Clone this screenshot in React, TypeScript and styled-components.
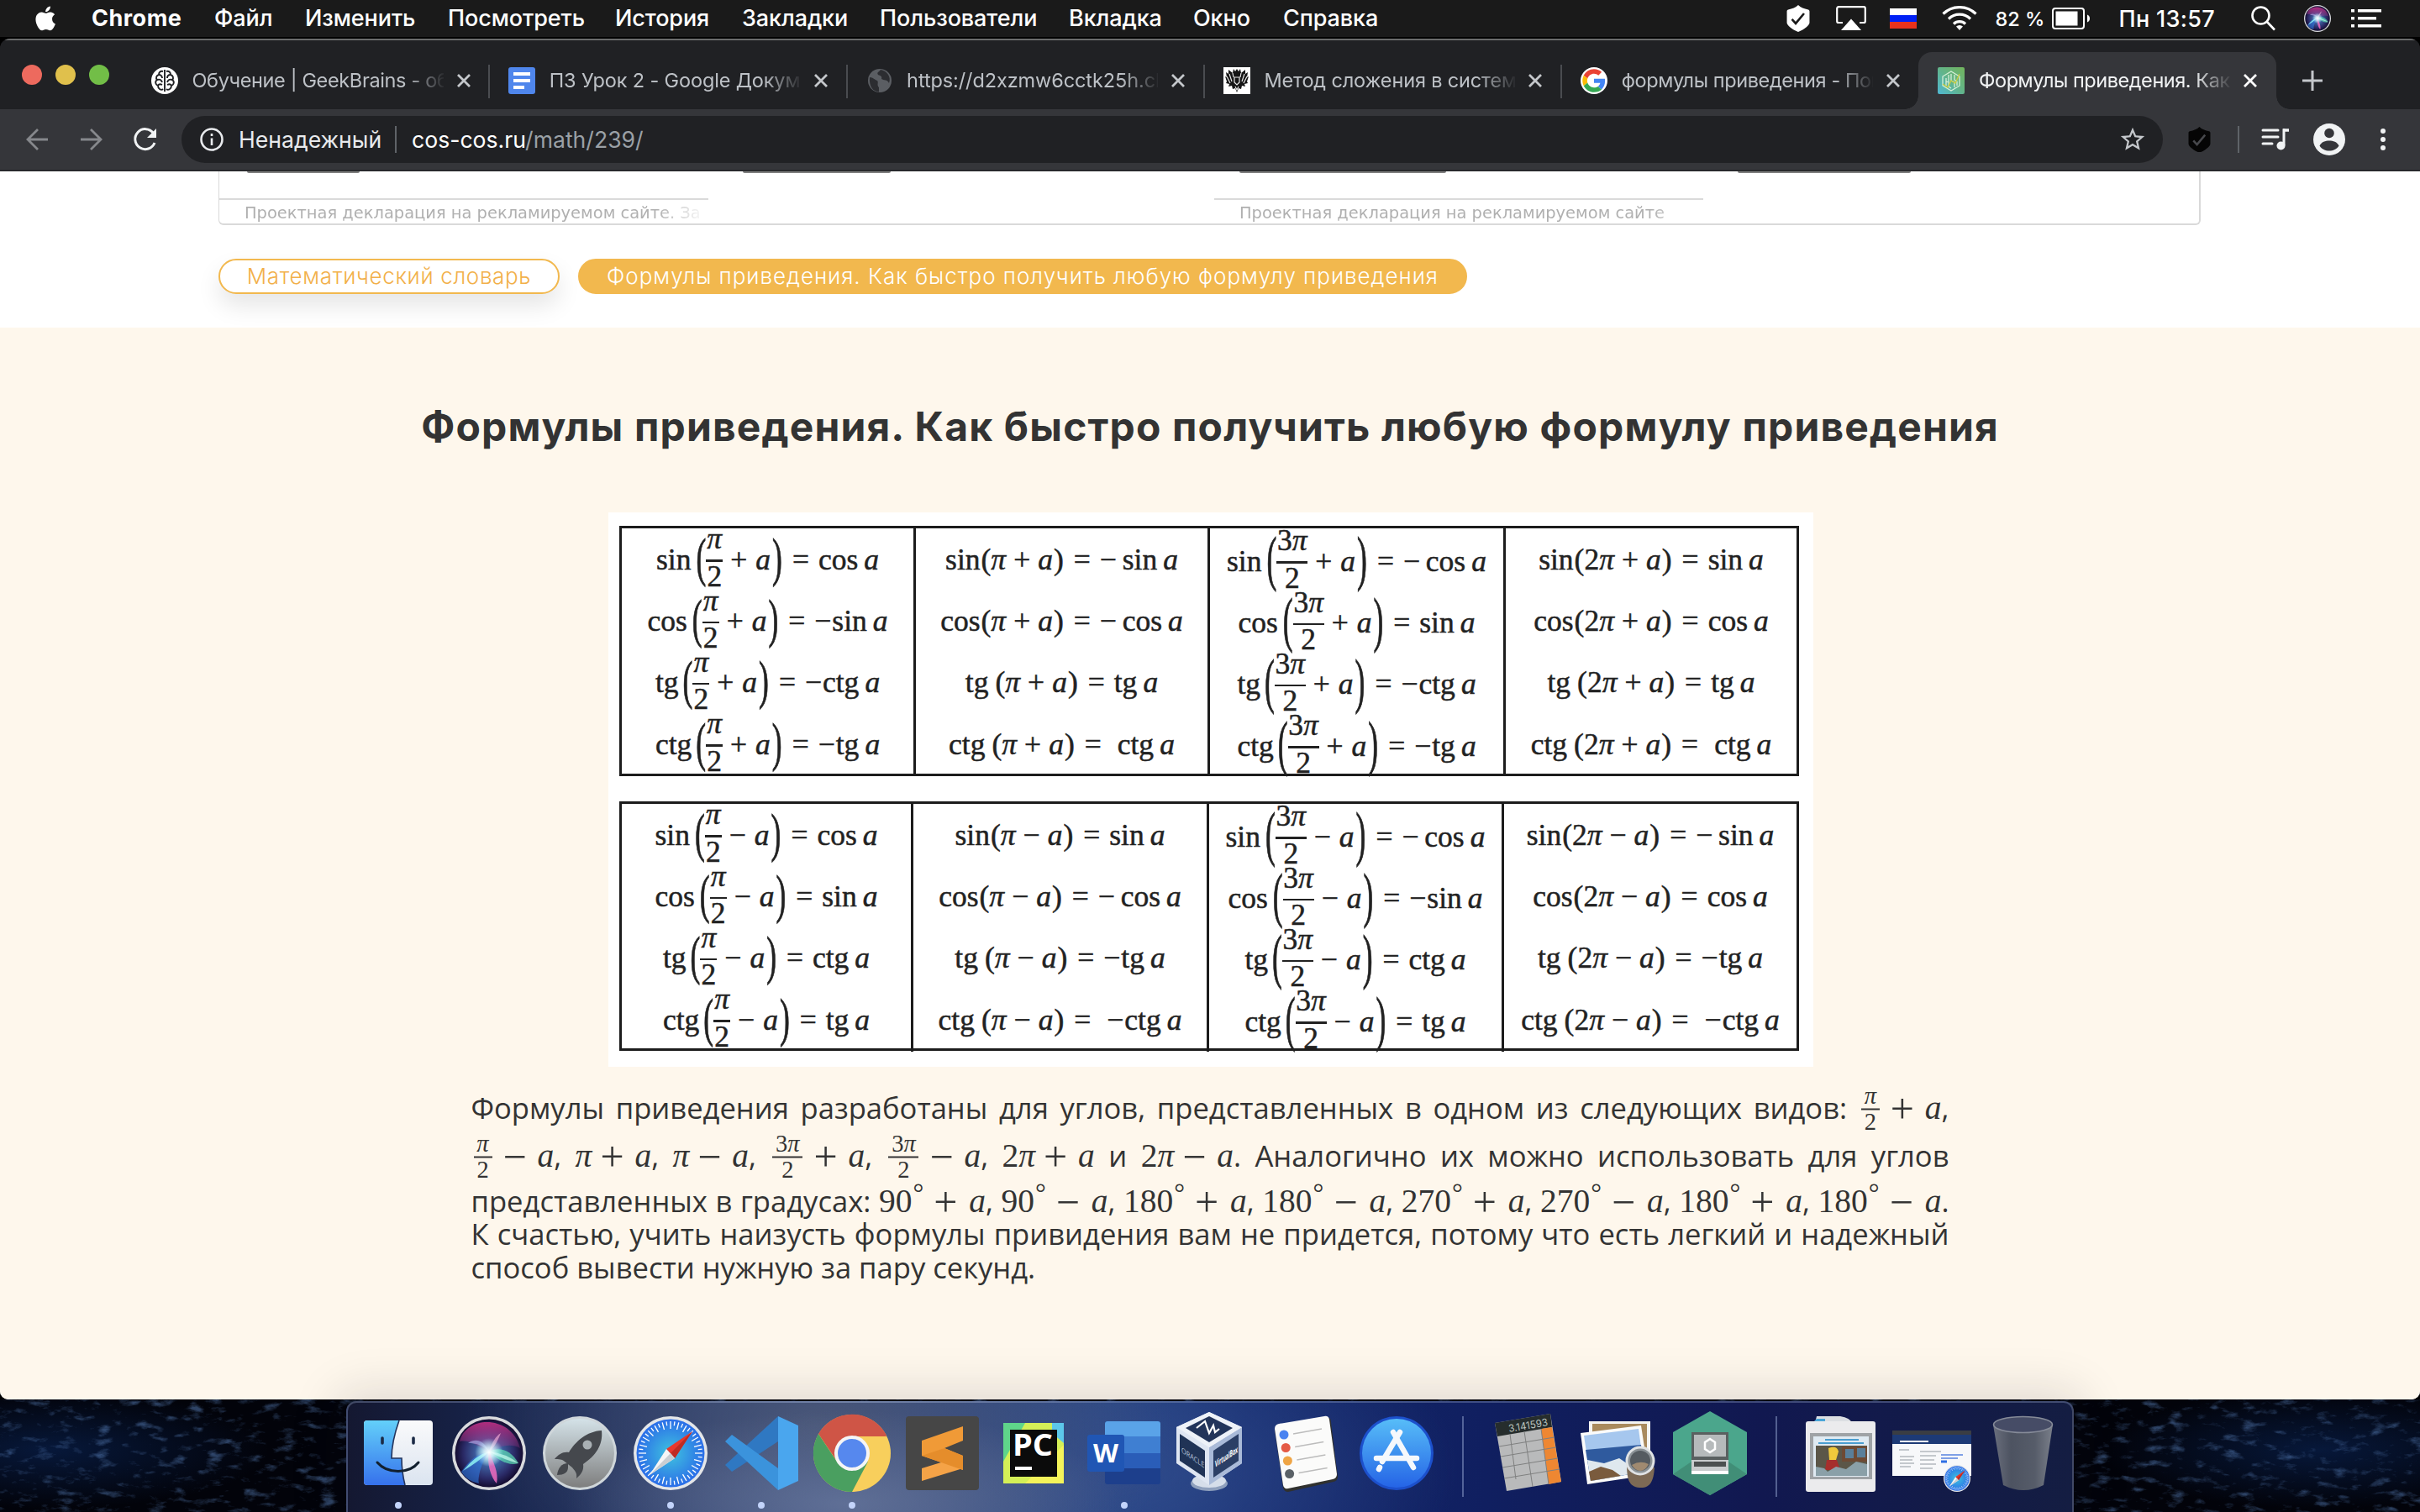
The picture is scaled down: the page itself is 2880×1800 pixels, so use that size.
import React from "react";
import styled, { createGlobalStyle, css } from "styled-components";

const Global = createGlobalStyle`
  * { box-sizing: border-box; }
  body { margin: 0; background: #000; }
  svg { display: block; flex: none; }
`;

const ui = `Inter, "Noto Sans", sans-serif`;
const serif = `"Liberation Serif", "DejaVu Serif", serif`;

const Screen = styled.div`
  width: 2880px;
  height: 1800px;
  overflow: hidden;
  background: #000;
  display: flex;
  flex-direction: column;
  font-family: ${ui};
`;

/* ---------- menu bar ---------- */
const MenuBar = styled.header`
  height: 46px;
  border-bottom: 2px solid #000;
  background: #1a1a1a;
  color: #fff;
  display: flex;
  align-items: center;
  justify-content: space-between;
  padding: 0 46.5px 0 41px;
`;
const MenuList = styled.nav`
  display: grid;
  grid-template-columns: 68px 146px 108px 170px 199px 151px 164px 225px 148px 107px 130px;
  align-items: center;
`;
const MenuItem = styled.span<{ $bold?: boolean }>`
  font-size: 27px;
  line-height: 44px;
  font-weight: ${(p) => (p.$bold ? 700 : 500)};
  letter-spacing: ${(p) => (p.$bold ? 0.5 : -0.1)}px;
  white-space: nowrap;
`;
const Status = styled.div`
  display: flex;
  align-items: center;
`;
const StatusCell = styled.div<{ $w: number }>`
  width: ${(p) => p.$w}px;
  display: flex;
  align-items: center;
`;
const StatusText = styled.span<{ $size: number; $ls?: number }>`
  font-size: ${(p) => p.$size}px;
  letter-spacing: ${(p) => p.$ls ?? 0}px;
  font-weight: 500;
  white-space: nowrap;
`;

/* ---------- browser chrome ---------- */
const Window = styled.section`
  height: 1620px;
  border-radius: 12px 12px 10px 10px;
  overflow: hidden;
  background: #202124;
  display: flex;
  flex-direction: column;
`;
const TabStrip = styled.div`
  height: 84px;
  border-top: 2px solid #6a6b6b;
  background: #202124;
  display: flex;
  align-items: flex-end;
`;
const Lights = styled.div`
  width: 157px;
  height: 82px;
  padding: 0 0 0 26px;
  display: flex;
  gap: 16px;
  align-items: center;
`;
const Light = styled.i<{ $c: string }>`
  width: 24px;
  height: 24px;
  border-radius: 50%;
  background: ${(p) => p.$c};
`;
const Tab = styled.div<{ $active?: boolean; $line?: boolean }>`
  position: relative;
  width: 425.3px;
  height: 68px;
  padding: 0 16px 0 23px;
  display: flex;
  align-items: center;
  color: ${(p) => (p.$active ? "#f1f3f4" : "#bdc1c6")};
  ${(p) =>
    p.$active &&
    css`
      background: #35363a;
      border-radius: 16px 16px 0 0;
      &::before,
      &::after {
        content: "";
        position: absolute;
        bottom: 0;
        width: 16px;
        height: 16px;
      }
      &::before {
        left: -16px;
        background: radial-gradient(circle at 0 0, transparent 15.5px, #35363a 16px);
      }
      &::after {
        right: -16px;
        background: radial-gradient(circle at 100% 0, transparent 15.5px, #35363a 16px);
      }
    `}
  ${(p) =>
    p.$line &&
    css`
      &::after {
        content: "";
        position: absolute;
        right: -1px;
        top: 15px;
        width: 2px;
        height: 40px;
        background: #4a4c50;
      }
    `}
`;
const TabTitle = styled.span<{ $ls: number }>`
  width: 299px;
  margin-left: 16.5px;
  overflow: hidden;
  white-space: nowrap;
  font-size: 23.5px;
  line-height: 34px;
  letter-spacing: ${(p) => p.$ls}px;
  mask-image: linear-gradient(90deg, #000 255px, transparent 302px);
`;
const TabClose = styled.span`
  margin-left: 16px;
`;
const NewTab = styled.div`
  height: 68px;
  padding-left: 31px;
  display: flex;
  align-items: center;
`;
const Toolbar = styled.div`
  height: 74px;
  background: #35363a;
  border-bottom: 2px solid #28292c;
  display: flex;
  align-items: center;
  padding-left: 30px;
`;
const NavIcon = styled.span<{ $w: number }>`
  width: ${(p) => p.$w}px;
`;
const Omnibox = styled.div`
  width: 2358px;
  height: 56px;
  border-radius: 28px;
  background: #202124;
  display: flex;
  align-items: center;
  padding: 0 19px 0 22px;
`;
const Insecure = styled.span`
  margin-left: 18px;
  width: 186px;
  color: #e8eaed;
  font-size: 26.6px;
  white-space: nowrap;
`;
const Rule = styled.i`
  width: 2px;
  height: 32px;
  background: #5f6368;
`;
const Url = styled.span`
  flex: 1;
  margin-left: 18px;
  color: #9aa0a6;
  font-size: 26.6px;
  b {
    font-weight: 400;
    color: #fff;
  }
`;
const Actions = styled.div`
  display: flex;
  align-items: center;
  padding-left: 30px;
`;

/* ---------- page ---------- */
const Page = styled.main`
  flex: 1;
  background: #fff;
  display: flex;
  flex-direction: column;
`;
const AdBox = styled.div`
  width: 2359px;
  height: 64px;
  margin-left: 260px;
  border: solid #d9d9d9;
  border-width: 0 2px 2px 1.5px;
  border-radius: 0 0 6px 6px;
  display: grid;
  grid-template-columns: 589px 595px 589px 1fr;
`;
const AdCell = styled.div`
  display: flex;
  flex-direction: column;
`;
const AdStub = styled.i<{ $w: number; $x: number }>`
  width: ${(p) => p.$w}px;
  height: 2px;
  margin-left: ${(p) => p.$x}px;
  border-radius: 0 0 4px 4px;
  background: #7f7f7f;
`;
const AdRule = styled.i`
  width: 582px;
  height: 2px;
  margin-top: 30px;
  background: #dadada;
`;
const AdNote = styled.p`
  width: 583px;
  margin: 0;
  padding: 3px 0 0 30px;
  color: #b0b0b0;
  font: 19.45px/26px "DejaVu Sans", sans-serif;
  white-space: nowrap;
  overflow: hidden;
  mask-image: linear-gradient(90deg, #000 520px, transparent 580px);
`;
const Crumbs = styled.div`
  display: flex;
  gap: 22px;
  padding: 40px 0 40px 260px;
`;
const Crumb = styled.a<{ $w: number; $filled?: boolean }>`
  width: ${(p) => p.$w}px;
  height: 42px;
  padding-bottom: 2px;
  border: 2px solid #f2b84e;
  border-radius: 21px;
  display: flex;
  align-items: center;
  justify-content: center;
  white-space: nowrap;
  font-weight: 300;
  font-size: 26px;
  letter-spacing: ${(p) => (p.$filled ? 0.97 : 0.65)}px;
  background: ${(p) => (p.$filled ? "#f2b84e" : "#fff")};
  color: ${(p) => (p.$filled ? "#fff" : "#f2b04a")};
  box-shadow: ${(p) => (p.$filled ? "none" : "0 14px 28px rgba(0,0,0,.1)")};
`;
const Article = styled.article`
  flex: 1;
  background: #fef7ec;
  display: flex;
  flex-direction: column;
  align-items: center;
`;
const Title = styled.h1`
  margin: 84px 0 0;
  height: 136px;
  color: #333;
  font-size: 48px;
  line-height: 67px;
  font-weight: 700;
  letter-spacing: 1.14px;
  white-space: nowrap;
`;
const Sheet = styled.div`
  width: 1434px;
  height: 660px;
  margin-right: -2px;
  padding: 16px 17px 0 13px;
  background: #fff;
  display: flex;
  flex-direction: column;
  gap: 30px;
`;
const Table = styled.div<{ $cols: string; $h: number }>`
  height: ${(p) => p.$h}px;
  border: 3px solid #1c1c1c;
  display: grid;
  grid-template-columns: ${(p) => p.$cols};
`;
const Cell = styled.div<{ $shift: number }>`
  padding-top: ${(p) => p.$shift}px;
  border-right: 3px solid #1c1c1c;
  &:last-child {
    border-right: 0;
  }
`;
const Formula = styled.div`
  height: 73.3px;
  display: flex;
  align-items: center;
  justify-content: center;
  font: 35.5px/36px ${serif};
  color: #222;
  -webkit-text-stroke: 0.5px #222;
  white-space: pre;
`;
const Var = styled.i`
  font-style: italic;
`;
const Sign = styled.span<{ $l: number; $r: number }>`
  margin: 0 ${(p) => p.$r}px 0 ${(p) => p.$l}px;
`;
const Paren = styled.span<{ $scale: number; $l?: number; $r?: number }>`
  display: inline-block;
  transform: scaleY(${(p) => p.$scale});
  transform-origin: 50% 21px;
  margin: 0 ${(p) => p.$r ?? 0}px 0 ${(p) => p.$l ?? 0}px;
`;
const Frac = styled.span<{ $w: number }>`
  width: ${(p) => p.$w}px;
  display: flex;
  flex-direction: column;
  align-items: center;
  transform: translateY(2px);
  span {
    height: 35px;
  }
  span:first-child {
    line-height: 20px;
  }
  span:last-child {
    line-height: 35px;
  }
`;
const FracBar = styled.i`
  width: 100%;
  height: 2.5px;
  background: #222;
`;

const Prose = styled.div`
  width: 1759px;
  margin: 20px 0 0;
  color: #333;
  font-family: "Open Sans", "Noto Sans", sans-serif;
  font-size: 34.6px;
`;
const Line = styled.div<{ $h: number; $top?: number; $left?: boolean }>`
  height: ${(p) => p.$h}px;
  padding-top: ${(p) => p.$top ?? 0}px;
  line-height: ${(p) => p.$h - (p.$top ?? 0)}px;
  white-space: nowrap;
  text-align: justify;
  text-align-last: ${(p) => (p.$left ? "left" : "justify")};
`;
const Tex = styled.span`
  display: inline-flex;
  align-items: baseline;
  height: 38px;
  line-height: 38px;
  vertical-align: baseline;
  font-family: ${serif};
  font-size: 39.5px;
`;
const TexOp = styled.span<{ $wide?: boolean }>`
  width: 31px;
  margin: 0 ${(p) => (p.$wide ? 11 : 10)}px;
  text-align: center;
  font-size: 50px;
  line-height: 0;
  transform: translateY(5px);
`;
const TexFrac = styled.span<{ $w: number }>`
  width: ${(p) => p.$w}px;
  margin: 0 3px;
  align-self: center;
  display: flex;
  flex-direction: column;
  align-items: center;
  font-size: 28.5px;
  line-height: 26px;
  transform: translateY(0.5px);
  hr {
    width: 100%;
    height: 2px;
    margin: 2px 0 1px;
    border: 0;
    background: #333;
  }
`;
const Deg = styled.sup`
  font-size: 32px;
  line-height: 0;
  align-self: flex-start;
  transform: translateY(9px);
  margin: 0 1px;
`;

/* ---------- dock ---------- */
const Desktop = styled.footer`
  position: relative;
  height: 134px;
  display: flex;
  justify-content: center;
  padding: 2px 1px 0 0;
  background:
    radial-gradient(ellipse 260px 70px at 60px 60px, #07183a 0, transparent 100%),
    radial-gradient(ellipse 260px 70px at 2760px 60px, #07183a 0, transparent 100%),
    #02030a;
`;
const Sea = styled.svg`
  position: absolute;
  inset: 0;
`;
const Dock = styled.div`
  position: relative;
  width: 2056px;
  height: 132px;
  padding-left: 6px;
  border: 2px solid rgba(150, 165, 200, 0.35);
  border-bottom: 0;
  border-radius: 12px 12px 0 0;
  display: flex;
  box-shadow: 0 0 56px 12px rgba(20, 20, 40, 0.13);
  background:
    radial-gradient(ellipse 330px 110px at 590px 120px, #5f6f96 0, transparent 100%),
    radial-gradient(ellipse 420px 260px at 560px 30px, #4a5778 0, transparent 100%),
    radial-gradient(ellipse 420px 220px at 900px 80px, #2f4b8c 0, transparent 100%),
    linear-gradient(90deg, #141831 0, #17244c 9%, #263f7c 32%, #24427e 44%, #13276a 52%, #101f60 66%, #111850 82%, #141d42 100%);
`;
const DockItem = styled.div`
  width: 108px;
  margin-top: -2px;
  display: flex;
  flex-direction: column;
  align-items: center;
  position: relative;
`;
const Running = styled.i`
  position: absolute;
  top: 120px;
  width: 8px;
  height: 8px;
  border-radius: 50%;
  background: #c3d4fb;
`;
const DockRule = styled.i`
  width: 2px;
  height: 96px;
  margin: 16px 23px 0 24px;
  background: rgba(150, 165, 210, 0.5);
`;

/* ---------- icon drawings ---------- */
const Apple = () => (
  <svg width="28" height="34" viewBox="2 0 20 24" fill="#fff">
    <path d="M17.05 12.54c-.03-2.6 2.12-3.85 2.22-3.91-1.21-1.77-3.1-2.01-3.77-2.04-1.6-.16-3.13.94-3.94.94-.81 0-2.07-.92-3.4-.9-1.75.03-3.36 1.02-4.26 2.58-1.82 3.15-.46 7.82 1.31 10.38.87 1.25 1.9 2.66 3.25 2.61 1.3-.05 1.8-.84 3.37-.84 1.58 0 2.02.84 3.4.82 1.41-.03 2.3-1.28 3.16-2.54.99-1.46 1.4-2.87 1.42-2.94-.03-.01-2.73-1.05-2.76-4.16zM14.46 4.9c.72-.87 1.2-2.08 1.07-3.29-1.03.04-2.29.69-3.03 1.56-.66.77-1.25 2-1.09 3.18 1.15.09 2.33-.59 3.05-1.45z" />
  </svg>
);
const Shield = ({ c, k, w = 28 }: { c: string; k: string; w?: number }) => (
  <svg width={w} height={w * 1.14} viewBox="0 0 28 32">
    <path d="M14 0c3 3 7 4.500 12 5.500.8.200 1.500 1 1.500 2V21c0 3-6 8-13.500 11C6.500 29 .5 24 .5 21V7.500c0-1 .7-1.800 1.500-2C7 4.500 11 3 14 0z" fill={c} />
    <path d="M6.500 17l4.500 5L21 10" stroke={k} strokeWidth="2.600" fill="none" />
  </svg>
);
const Airplay = () => (
  <svg width="36" height="30" viewBox="0 0 36 30">
    <path d="M8 20H3a1.800 1.800 0 0 1-1.800-1.800V3A1.800 1.800 0 0 1 3 1.200h30A1.800 1.800 0 0 1 34.800 3v15.200A1.800 1.800 0 0 1 33 20h-5" stroke="#fff" strokeWidth="2.200" fill="none" />
    <path d="M18 15.500l12 13.500H6z" fill="#fff" />
  </svg>
);
const Flag = () => (
  <svg width="32" height="24" viewBox="0 0 32 24">
    <path fill="#fff" d="M0 0h32v8H0z" />
    <path fill="#0020f5" d="M0 8h32v8H0z" />
    <path fill="#e8321c" d="M0 16h32v8H0z" />
  </svg>
);
const Wifi = () => (
  <svg width="42" height="30" viewBox="0 0 42 30" fill="none" stroke="#fff" strokeWidth="3.200">
    <path d="M1.500 9.500a28 28 0 0 1 39 0M8 15.500a18.500 18.500 0 0 1 26 0M14 21.500a10 10 0 0 1 14 0" />
    <path d="M21 29l-4-4.500a6 6 0 0 1 8 0z" fill="#fff" stroke="none" />
  </svg>
);
const Battery = () => (
  <svg width="46" height="26" viewBox="0 0 46 26">
    <rect x="1" y="1" width="37" height="24" rx="3" fill="none" stroke="#fff" strokeWidth="2" />
    <rect x="4.500" y="4.500" width="26" height="17" fill="#fff" />
    <path d="M42 8.500c4 1 4 8 0 9z" fill="#fff" />
  </svg>
);
const Search = () => (
  <svg width="30" height="30" viewBox="0 0 30 30" fill="none" stroke="#fff" strokeWidth="2.600">
    <circle cx="11.500" cy="11.500" r="10" />
    <path d="M18.500 18.500L28 28.500" />
  </svg>
);
const SiriOrb = ({ r, ring = "#d8dadd" }: { r: number; ring?: string }) => (
  <>
    <defs>
      <radialGradient id={`orb${r}`} cx=".5" cy=".5" r=".5">
        <stop offset="0" stopColor="#8fd8ee" />
        <stop offset=".4" stopColor="#3d5c9c" />
        <stop offset=".75" stopColor="#2a2a66" />
        <stop offset="1" stopColor="#140c30" />
      </radialGradient>
      <radialGradient id={`glow${r}`}>
        <stop offset="0" stopColor="#fff" />
        <stop offset=".35" stopColor="#e8fbff" stopOpacity=".75" />
        <stop offset="1" stopColor="#aef2ff" stopOpacity="0" />
      </radialGradient>
      <linearGradient id={`orbp${r}`} x1="0" y1="0" x2="0" y2="1">
        <stop offset="0" stopColor="#c22f84" stopOpacity=".9" />
        <stop offset=".7" stopColor="#a63a8c" stopOpacity=".35" />
        <stop offset="1" stopColor="#7a2b8f" stopOpacity="0" />
      </linearGradient>
    </defs>
    <g transform={`scale(${r / 44})`}>
      <circle r="44" fill={ring} />
      <circle r="40.500" fill={`url(#orb${r})`} />
      <path d="M-35-14C-27-46 27-46 37-6 26-12 12-10 0 2-12-10-24-16-35-14z" fill={`url(#orbp${r})`} />
      <path d="M-33 22C-20 4-10-2 0 0-8 8-14 28-12 36-22 34-29 29-33 22z" fill="#2f7ae0" opacity=".6" />
      <path d="M-31 21Q-16 2 0-2-12 10-31 21z" fill="#8ff3f3" opacity=".85" />
      <path d="M0-2C12-8 26-4 35 12 24 16 10 8 0-2z" fill="#5fe9b8" opacity=".65" />
      <path d="M0-2Q20 0 35 12 18 8 0-2z" fill="#c8fff0" opacity=".7" />
      <path d="M0-2c5 12 12 26 9 38C2 28-3 12 0-2z" fill="#f06cc0" opacity=".85" />
      <path d="M-25-12C-14-20-4-12 0-2-8-10-16-12-25-12z" fill="#b9c6ff" opacity=".5" />
      <path d="M0-2C4-14 8-20 14-24 10-14 6-6 0-2z" fill="#ffb7dd" opacity=".6" />
      <circle cy="-1" r="17" fill={`url(#glow${r})`} />
    </g>
  </>
);
const MenuLines = () => (
  <svg width="36" height="22" viewBox="0 0 36 22" fill="#fff">
    <path d="M0 0h4v3.600H0zM8 0h28v3.600H8zM0 9h4v3.600H0zM8 9h22v3.600H8zM0 18h4v3.600H0zM8 18h28v3.600H8z" />
  </svg>
);
const Close = ({ c = "#c4c7cb" }: { c?: string }) => (
  <svg width="16" height="16" viewBox="0 0 16 16" stroke={c} strokeWidth="2.800">
    <path d="M1 1l14 14M15 1L1 15" />
  </svg>
);
const FavBrain = () => (
  <svg width="32" height="32" viewBox="0 0 32 32">
    <circle cx="16" cy="16" r="16" fill="#fff" />
    <g fill="none" stroke="#202124" strokeWidth="1.900">
      <path d="M16 3v26M14 5c-3-1-5 1-5 4-3 1-4 4-2 6-3 2-2 6 1 7 0 4 4 6 6 4M18 5c3-1 5 1 5 4 3 1 4 4 2 6 3 2 2 6-1 7 0 4-4 6-6 4" />
      <path d="M9 9c2 0 4 1 4 4M7 15c3-1 5 0 6 3M8 22c1-2 3-2 5-1M23 9c-2 0-4 1-4 4M25 15c-3-1-5 0-6 3M24 22c-1-2-3-2-5-1" />
    </g>
  </svg>
);
const FavDocs = () => (
  <svg width="32" height="32" viewBox="0 0 32 32">
    <rect width="32" height="32" rx="3" fill="#4f86ec" />
    <path d="M6 6h20v4H6zM6 14h20v4H6zM6 22h13v4H6z" fill="#fff" />
  </svg>
);
const FavGlobe = () => (
  <svg width="32" height="32" viewBox="0 0 32 32">
    <circle cx="16" cy="16" r="14" fill="#5b5e63" />
    <path d="M4 12c4 0 6 3 9 4 2 2-1 5 2 8v5.500C8 29 3 23 4 12zM17 3c-2 3-5 3-3 6 3 1 5 2 4 5 3 2 7 0 9 5 3-8-3-15-10-16z" fill="#2c2d31" />
  </svg>
);
const FavCrest = () => (
  <svg width="32" height="32" viewBox="0 0 32 32">
    <path d="M0 0h32v32H0z" fill="#fff" />
    <path d="M12 2l2 3 2-3 2 3 2-3 1 5 5-4v5l3-2-1 6 2-1-2 6 1 2-4 1 1 3-4-1-1 4-3-1-2 5-2-5-3 1-1-4-4 1 1-3-4-1 1-2-2-6 2 1-1-6 3 2V3l5 4z" fill="#151515" />
    <path d="M13 12h6v6l-3 3-3-3zM11 7l1 5M21 7l-1 5M7 8l3 9M25 8l-3 9M4 11l4 8M28 11l-4 8M14 23l2 4 2-4" stroke="#e8e8e8" strokeWidth="1.200" fill="none" />
  </svg>
);
const FavGoogle = () => (
  <svg width="32" height="32" viewBox="-4 -4 56 56">
    <circle cx="24" cy="24" r="28" fill="#fff" />
    <path fill="#EA4335" d="M24 9.500c3.540 0 6.710 1.220 9.210 3.600l6.850-6.850C35.900 2.380 30.470 0 24 0 14.620 0 6.510 5.380 2.560 13.220l7.980 6.190C12.430 13.720 17.740 9.500 24 9.500z" />
    <path fill="#4285F4" d="M46.980 24.550c0-1.570-.15-3.090-.38-4.550H24v9.020h12.940c-.58 2.960-2.260 5.480-4.780 7.180l7.730 6c4.510-4.180 7.090-10.360 7.090-17.650z" />
    <path fill="#FBBC05" d="M10.530 28.590c-.48-1.450-.76-2.990-.76-4.590s.27-3.140.76-4.590l-7.980-6.190C.92 16.460 0 20.120 0 24c0 3.880.92 7.540 2.560 10.780l7.970-6.190z" />
    <path fill="#34A853" d="M24 48c6.480 0 11.930-2.130 15.890-5.810l-7.730-6c-2.150 1.450-4.920 2.300-8.160 2.300-6.260 0-11.570-4.220-13.470-9.910l-7.980 6.190C6.510 42.620 14.620 48 24 48z" />
  </svg>
);
const FavCube = () => (
  <svg width="32" height="32" viewBox="0 0 32 32">
    <defs>
      <linearGradient id="cube" x1="0" y1="1" x2="1" y2="0">
        <stop offset="0" stopColor="#4fb8d4" />
        <stop offset=".5" stopColor="#62b48a" />
        <stop offset="1" stopColor="#72b45c" />
      </linearGradient>
    </defs>
    <rect width="32" height="32" rx="2" fill="url(#cube)" />
    <path d="M16 5l10 6v11l-10 6-10-6V11zM10 13v9M10 17l3 1M13 9v14l3 2M16 8v8l4 2v6M20 9v6l3 2v5" stroke="#d7f0d8" strokeWidth="1.300" fill="none" />
    <path d="M6 20l6 4 4-8 5 3 5-11" stroke="#c9cc3e" strokeWidth="1.300" fill="none" />
  </svg>
);
const ArrowLeft = ({ flip }: { flip?: boolean }) => (
  <svg width="28" height="28" viewBox="0 0 28 28" fill="none" stroke="#86888c" strokeWidth="2.800" transform={flip ? "scale(-1 1)" : undefined}>
    <path d="M27 14H4M15 2L3 14l12 12" />
  </svg>
);
const Reload = () => (
  <svg width="30" height="30" viewBox="0 0 30 30">
    <path d="M24.500 7.500A12 12 0 1 0 26 19" fill="none" stroke="#f1f3f4" strokeWidth="3" />
    <path d="M28 2v11H17z" fill="#f1f3f4" />
  </svg>
);
const Info = () => (
  <svg width="28" height="28" viewBox="0 0 28 28" fill="none" stroke="#e8eaed" strokeWidth="2.600">
    <circle cx="14" cy="14" r="12.500" />
    <path d="M14 12.500V21M14 7v3" />
  </svg>
);
const Star = () => (
  <svg width="34" height="34" viewBox="0 0 24 24" fill="#c4c7cb">
    <path d="M22 9.240l-7.190-.62L12 2 9.190 8.630 2 9.240l5.460 4.730L5.820 21 12 17.270 18.180 21l-1.630-7.030L22 9.240zM12 15.400l-3.760 2.270 1-4.280-3.320-2.880 4.380-.38L12 6.100l1.710 4.040 4.380.38-3.320 2.880 1 4.280L12 15.400z" />
  </svg>
);
const Playlist = () => (
  <svg width="34" height="28" viewBox="0 0 34 28">
    <path d="M2 3h18M2 11h18M2 19h11" stroke="#f1f3f4" strokeWidth="3" strokeLinecap="round" />
    <path d="M26 3h7" stroke="#f1f3f4" strokeWidth="3.400" />
    <path d="M27 1.300v20" stroke="#f1f3f4" strokeWidth="3" />
    <circle cx="23.500" cy="21.500" r="5" fill="#f1f3f4" />
  </svg>
);
const Avatar = () => (
  <svg width="38" height="38" viewBox="0 0 38 38">
    <circle cx="19" cy="19" r="19" fill="#f1f3f4" />
    <circle cx="19" cy="11.500" r="5.800" fill="#35363a" />
    <path d="M7.500 26.500c2-4.500 7-6 11.500-6s9.500 1.500 11.500 6c-2.500 4-7 6-11.500 6s-9-2-11.500-6z" fill="#35363a" />
  </svg>
);
const Dots = () => (
  <svg width="8" height="28" viewBox="0 0 8 28" fill="#f1f3f4">
    <circle cx="4" cy="4" r="3" />
    <circle cx="4" cy="14" r="3" />
    <circle cx="4" cy="24" r="3" />
  </svg>
);

const safariTicks = Array.from({ length: 48 }, (_, i) => i * 7.5);
const SafariDial = ({ r }: { r: number }) => (
  <g transform={`scale(${r / 44})`}>
    <circle r="44" fill="#e4e6e8" />
    <circle r="40.500" fill="url(#safari)" />
    {safariTicks.map((a, i) => (
      <path key={a} d={i % 2 ? "M0-38v5" : "M0-38v9"} stroke="#fff" strokeWidth="1.300" transform={`rotate(${a})`} />
    ))}
    <path d="M26-26L5 6-5-5z" fill="#e8382d" />
    <path d="M26-26L5 6 0 0z" fill="#bf2b22" />
    <path d="M-25 26L-5-5 5 6z" fill="#f6f6f6" />
    <path d="M-25 26L0 0 5 6z" fill="#c9ced2" />
  </g>
);

const glyphs: Record<string, React.ReactNode> = {
  finder: (
    <>
      <defs>
        <linearGradient id="fl" x1="0" y1="0" x2="0" y2="1">
          <stop offset="0" stopColor="#63d0fa" />
          <stop offset="1" stopColor="#3671ec" />
        </linearGradient>
        <linearGradient id="fr" x1="0" y1="0" x2="0" y2="1">
          <stop offset="0" stopColor="#fafafb" />
          <stop offset="1" stopColor="#dbe4f0" />
        </linearGradient>
      </defs>
      <rect x="-41" y="-39" width="82" height="77" rx="4" fill="url(#fr)" />
      <path d="M-37-39H1C-5-22-8-9-8 6H4c0 10 1 20 4 32h-45a4 4 0 0 1-4-4v-69a4 4 0 0 1 4-4z" fill="url(#fl)" />
      <path d="M1-39C-5-22-8-9-8 6H4c0 10 1 20 4 32" fill="none" stroke="#24345c" strokeWidth="1.600" />
      <path d="M-19-18v6M18-18v6" stroke="#1c2b46" strokeWidth="3.600" strokeLinecap="round" />
      <path d="M-25 11c12 14 38 14 49 0" fill="none" stroke="#12202f" strokeWidth="3" strokeLinecap="round" />
    </>
  ),
  siri: <SiriOrb r={44} />,
  rocket: (
    <>
      <defs>
        <linearGradient id="rk" x1="0" y1="0" x2="0" y2="1">
          <stop offset="0" stopColor="#d4e2e8" />
          <stop offset="1" stopColor="#7e7e7e" />
        </linearGradient>
      </defs>
      <circle r="44" fill="#cfd6da" />
      <circle r="41" fill="url(#rk)" />
      <path d="M26-27C8-26-5-14-13-1c-7-1-12 2-17 8 5 0 9 0 12 3L-9 17c3 4 6 6 5 13 6-5 9-10 8-17C19 3 28-10 26-27z" fill="#45484d" />
      <circle cx="9" cy="-10" r="5.500" fill="#a9b0b4" />
      <path d="M-14 12c-8 0-12 6-13 14 8 0 13-3 13-9z" fill="#45484d" />
    </>
  ),
  safari: (
    <>
      <defs>
        <radialGradient id="safari">
          <stop offset="0" stopColor="#3fc3df" />
          <stop offset="1" stopColor="#2b6ee8" />
        </radialGradient>
      </defs>
      <SafariDial r={44} />
    </>
  ),
  code: (
    <>
      <path d="M-43 14L20-44V-14L-35 22z" fill="#2f78c2" />
      <path d="M-43-14l8-8L20 18v26z" fill="#3b93dc" />
      <path d="M20-44l24 11v66L20 44z" fill="#4aa6ee" />
    </>
  ),
  chrome: (
    <>
      <circle r="46" fill="#f8cf5c" />
      <path d="M-40-23A46 46 0 0 1 40-23L41-20H0L-19 8z" fill="#cf5546" />
      <path d="M-40-23A46 46 0 0 0 0 46L19 10 0 20-18 10z" fill="#4a9f60" />
      <circle r="21" fill="#f5f5f5" />
      <circle r="17" fill="#5688ee" />
    </>
  ),
  sublime: (
    <>
      <rect x="-44" y="-44" width="87" height="88" rx="4" fill="#464646" />
      <path d="M24-32L-25-15V3L24 20V3L2-6 24-15z" fill="#f09a37" />
      <path d="M24 3L-25 18v15L24 18z" fill="#f5a347" />
      <path d="M24 20L-25 3 2-6 24 3z" fill="#e58d2b" />
    </>
  ),
  pycharm: (
    <>
      <path d="M-36-36h72v72h-72z" fill="#5fd58a" />
      <path d="M-10-36h34L36-20v56h-72V10z" fill="#d4ef57" />
      <path d="M-10 36L36-10v46z" fill="#f4f35a" />
      <path d="M22-36h14v24L22-24z" fill="#5cc7ea" />
      <rect x="-28" y="-28" width="56" height="56" fill="#0b0b0b" />
      <text x="-25" y="3" fontFamily="Open Sans" fontWeight="700" fontSize="35" textLength="48" lengthAdjust="spacingAndGlyphs" fill="#fff">PC</text>
      <path d="M-22 18H-2" stroke="#fff" strokeWidth="4" />
    </>
  ),
  word: (
    <>
      <rect x="-23" y="-38" width="66" height="75" rx="3" fill="#1d3f8c" />
      <path d="M-23-20h66v38h-66z" fill="#2a5db8" />
      <path d="M-23-20h66V0h-66z" fill="#3f7fd2" />
      <path d="M-20-38h60a3 3 0 0 1 3 3v15h-66v-15a3 3 0 0 1 3-3z" fill="#5aa3e8" />
      <rect x="-44" y="-22" width="44" height="44" rx="3" fill="#2056b4" />
      <text x="-22" y="11" fontFamily="Open Sans" fontWeight="700" fontSize="31" textAnchor="middle" fill="#fff">W</text>
    </>
  ),
  vbox: (
    <g transform="translate(-7 0)">
      <ellipse cy="36" rx="22" ry="9" fill="#8fa0bd" />
      <ellipse cy="33" rx="20" ry="8" fill="#d6deea" />
      <path d="M0-49L39-31V12L0 38-39 12V-31z" fill="#dfe6f2" />
      <path d="M39-31L0-7V38L39 12z" fill="#a9bad8" />
      <path d="M0-49L39-31 0-7-39-31z" fill="#eef2f8" />
      <path d="M0-44L28-30 0-13-28-30z" fill="#22345a" />
      <path d="M-15-30L-5-38 0-24 5-33 7-25 12-29" stroke="#fff" strokeWidth="2.200" fill="none" />
      <path d="M-35-23L-5-3V29L-35 9z" fill="#203356" />
      <path d="M35-23L5-3V29L35 9z" fill="#2b3f66" />
      <text transform="matrix(.8 .55 0 1 -33 -1)" fontFamily="Open Sans" fontSize="9" textLength="34" lengthAdjust="spacingAndGlyphs" fill="#b8c4da">ORACLE</text>
      <text transform="matrix(.75 -.5 0 1 7 17)" fontFamily="Open Sans" fontWeight="700" fontSize="11" textLength="36" lengthAdjust="spacingAndGlyphs" fill="#fff">VirtualBox</text>
    </g>
  ),
  reminders: (
    <>
      <path d="M-32-34L24-43q5-1 5 5L37 27q0 5-5 6L-22 45q-5 0-6-5L-38-28q0-5 6-6z" fill="#30312f" transform="translate(1 1)" />
      <path d="M-32-35L22-44q5-1 6 4L37 25q0 5-5 6L-21 42q-5 1-6-4L-37-29q0-5 5-6z" fill="#fbfbfa" />
      {["#4a83f0", "#e45a45", "#efa545", "#5a6166"].map((c, i) => (
        <g key={c}>
          <circle cx={-26 + i * 2.2} cy={-22 + i * 15.5} r="5.500" fill={c} />
          <path d={`M${-15 + i * 2.2} ${-23 + i * 15.5}l34-6`} stroke="#bcbcbc" strokeWidth="1.500" />
        </g>
      ))}
    </>
  ),
  appstore: (
    <>
      <defs>
        <linearGradient id="as" x1="0" y1="0" x2="0" y2="1">
          <stop offset="0" stopColor="#57bdf8" />
          <stop offset="1" stopColor="#2564e6" />
        </linearGradient>
      </defs>
      <circle r="44" fill="#1c50cc" />
      <circle r="41" fill="url(#as)" />
      <g stroke="#f5f8fc" strokeWidth="6.500" strokeLinecap="round">
        <path d="M4-25L-17 10M-20 17L-21 19M-4-25L20 17M-24 6H24" />
      </g>
    </>
  ),
  calculator: (
    <>
      <path d="M-40-36L26-47 39 34-26 45z" fill="#b9babb" />
      <path d="M-40-36L26-47 28-31-37-20z" fill="#262d2d" />
      <path d="M15-29L28-31 39 34 24 37z" fill="#ee8732" />
      <g stroke="#7f8080" strokeWidth="1">
        <path d="M-35-8L31-19M-33 4L33-7M-31 17L35 6M-29 30L37 19M-22-23L-15 31M-5-26L5 40M15-29L24 37" />
      </g>
      <text transform="matrix(.95 -.16 .16 1 -23 -25)" fontFamily="Inter" fontSize="12" fill="#b9c2bf">3.141593</text>
    </>
  ),
  preview: (
    <>
      <path d="M-36-38H37V8H-36z" fill="#f4f4f2" />
      <path d="M-32-35H33V4H-32z" fill="#a98a5d" />
      <path d="M-46-24L26-33 35 26-38 37z" fill="#fbfbfa" />
      <path d="M-42-21L23-29 30 22-34 33z" fill="#a6c7ee" />
      <path d="M-40-4L26-10 30 22-34 33z" fill="#2f5a9e" />
      <path d="M-38 8l20 4 18-6 12 8 17 2 1 6-64 11z" fill="#dfe8ee" />
      <path d="M-36 22l14-6 14 4 10 7-36 6z" fill="#7a5b3d" />
      <path d="M9 12C9 30 11 40 24 41s17-8 18-24z" fill="#7d6a55" />
      <circle cx="25" cy="9" r="16" fill="#8b9296" stroke="#dfe2e4" strokeWidth="3" />
      <circle cx="25" cy="9" r="12" fill="#555b60" />
      <path d="M15 14q10-6 20-1-4 8-10 8t-10-7z" fill="#a08a70" />
    </>
  ),
  hexagon: (
    <>
      <path d="M0-50L44-25V25L0 50-44 25V-25z" fill="#4ba68c" />
      <path d="M-44 25L-22 10H22L44 25 0 50z" fill="#418e77" />
      <path d="M-22-25H22V25H-22z" fill="#c9cccd" />
      <path d="M-22-25H22V8H-22z" fill="#5a6060" />
      <path d="M-19-22H19V4H-19z" fill="#b6babb" />
      <path d="M0-17L6-13V-5L0-1-6-5V-13z" fill="none" stroke="#fff" strokeWidth="2.500" />
      <path d="M-19 10H19V16H-19z" fill="#4c5050" />
      <path d="M-22 21H22V25H-22z" fill="#fff" />
    </>
  ),
  document: (
    <>
      <path d="M-30-44H-2Q10-42 12-36H-32z" fill="#dcdfe3" />
      <rect x="-43" y="-38" width="83" height="84" rx="3" fill="#ebebed" />
      <path d="M-38-24H36V31H-38z" fill="#9fa3a6" />
      <path d="M-34-20H32V28H-34z" fill="#dfeaf2" />
      <path d="M-31-9H30V27H-31z" fill="#5b5648" />
      <path d="M0-8H30V10H0z" fill="#6e4a34" />
      <path d="M4-5H14V6H4zM18-6H28V5H18z" fill="#5a7f9a" />
      <path d="M-16-6q10-4 12 4l-3 10h-8z" fill="#f0c93c" />
      <path d="M-18 8h12l4 12h-18z" fill="#a62e2c" />
      <path d="M-31 16l10 2 4 4 10-6 12 3 12-9 13 3v14h-61z" fill="#8aa0a8" />
      <path d="M-20-16H20M-28-12H26" stroke="#4a9ed0" strokeWidth="2" />
      <path d="M-30-41H-20V-38H-33z" fill="#49a6d8" />
    </>
  ),
  browser: (
    <>
      <path d="M-48-27H46V27H-48z" fill="#f7f8fa" />
      <path d="M-48-27H46V-22H-48z" fill="#3a3d43" />
      <path d="M-48-22H46V-11H-48z" fill="#1d3a76" />
      <path d="M-39-14H-5" stroke="#fff" strokeWidth="2" />
      <path d="M-40-4H-28M-39 4H-22M-39 8H-24M-39 12H-22M-39 16H-26M-15-2H10M-15 3H4M-15 8H2M-15 13H4M-15 18H0" stroke="#b4b8bf" strokeWidth="1.500" />
      <path d="M10 2H36M10 6H30" stroke="#7fa0e6" strokeWidth="2" />
      <path d="M10 10H17" stroke="#2f6fe4" strokeWidth="3" />
      <g transform="translate(29 30)">
        <SafariDial r={16} />
      </g>
    </>
  ),
  trash: (
    <>
      <defs>
        <linearGradient id="tr" x1="0" y1="0" x2="1" y2="0">
          <stop offset="0" stopColor="#6a6f7d" />
          <stop offset=".3" stopColor="#4d5361" />
          <stop offset=".7" stopColor="#565c69" />
          <stop offset="1" stopColor="#7a7f8a" />
        </linearGradient>
      </defs>
      <path d="M-36-34L-24 38Q0 50 24 38L35-34z" fill="url(#tr)" />
      <ellipse cx="-.5" cy="-34" rx="35" ry="9.500" fill="#464c66" stroke="#868b98" strokeWidth="1.600" />
    </>
  ),
};

const DockIcon = ({ name, on }: { name: string; on?: boolean }) => (
  <DockItem>
    <svg width="108" height="132" viewBox="-54 -62 108 132">
      {glyphs[name]}
    </svg>
    {on && <Running />}
  </DockItem>
);

/* ---------- formulas ---------- */
type F = { fn: string; arg: string; op: string; res: string };

const Eq = ({ fn, arg, op, res }: F) => {
  const frac = arg.includes("/");
  const spaced = fn.endsWith("g");
  const num = arg.split("/")[0];
  const scale = num === "3π" ? 2.05 : 1.78;
  const indent = res.startsWith(" ");
  const [, minus, name] = res.trim().match(/^(−?\s?)(.*)$/) as RegExpMatchArray;
  return (
    <Formula>
      {fn}
      {frac ? (
        <>
          <Paren $scale={scale} $l={spaced ? 5 : 6}>(</Paren>
          <Frac $w={num === "3π" ? 37 : 20}>
            <span>{num.replace("π", "")}<Var>π</Var></span>
            <FracBar />
            <span>2</span>
          </Frac>
        </>
      ) : (
        <>
          <Paren $scale={1} $l={spaced ? 8 : 1}>(</Paren>
          {num.replace("π", "")}
          <Var>π</Var>
        </>
      )}
      <Sign $l={9} $r={frac ? 10 : 9}>{op}</Sign>
      <Var>a</Var>
      <Paren $scale={frac ? scale : 1} $l={frac ? 2 : 1}>)</Paren>
      <Sign $l={12} $r={indent ? 19 : 11}>=</Sign>
      {minus && <Sign $l={0} $r={minus.length > 1 ? -2 : 1}>{minus}</Sign>}
      {name}
      <Sign $l={7} $r={0}><Var>a</Var></Sign>
    </Formula>
  );
};

const fns = ["sin", "cos", "tg", "ctg"];
const plus = [
  { arg: "π/2", res: ["cos", "−sin", "−ctg", "−tg"] },
  { arg: "π", res: ["− sin", "− cos", "tg", " ctg"] },
  { arg: "3π/2", res: ["− cos", "sin", "−ctg", "−tg"] },
  { arg: "2π", res: ["sin", "cos", "tg", " ctg"] },
];
const minus = [
  { arg: "π/2", res: ["cos", "sin", "ctg", "tg"] },
  { arg: "π", res: ["sin", "− cos", "−tg", " −ctg"] },
  { arg: "3π/2", res: ["− cos", "−sin", "ctg", "tg"] },
  { arg: "2π", res: ["− sin", "cos", "−tg", " −ctg"] },
];

const Grid = ({ rows, op, cols, h }: { rows: typeof plus; op: string; cols: string; h: number }) => (
  <Table $cols={cols} $h={h}>
    {rows.map((c) => (
      <Cell key={c.arg} $shift={c.arg === "3π/2" ? 2 : 0}>
        {fns.map((fn, i) => (
          <Eq key={fn} fn={fn} arg={c.arg} op={op} res={c.res[i]} />
        ))}
      </Cell>
    ))}
  </Table>
);

const M = ({ n, f, v, deg, op }: { n?: string; f?: string; v?: boolean; deg?: boolean; op: string }) => (
  <Tex>
    {f !== undefined && (
      <TexFrac $w={f ? 36 : 22}>
        <span>{f}<Var>π</Var></span>
        <hr />
        <span>2</span>
      </TexFrac>
    )}
    {n}
    {v && <Var>π</Var>}
    {deg && <Deg>°</Deg>}
    <TexOp $wide={deg}>{op}</TexOp>
    <Var>a</Var>
  </Tex>
);

const menu = [
  "Файл", "Изменить", "Посмотреть", "История", "Закладки",
  "Пользователи", "Вкладка", "Окно", "Справка",
];
const tabs = [
  { icon: <FavBrain />, title: "Обучение | GeekBrains - об", ls: -0.35 },
  { icon: <FavDocs />, title: "ПЗ Урок 2 - Google Докумен", ls: -0.15 },
  { icon: <FavGlobe />, title: "https://d2xzmw6cctk25h.clo", ls: -0.1 },
  { icon: <FavCrest />, title: "Метод сложения в система", ls: -0.15 },
  { icon: <FavGoogle />, title: "формулы приведения - Пои", ls: -0.4 },
  { icon: <FavCube />, title: "Формулы приведения. Как", ls: -0.45 },
];

export default function App() {
  return (
    <Screen>
      <Global />
      <MenuBar>
        <MenuList>
          <Apple />
          <MenuItem $bold>Chrome</MenuItem>
          {menu.map((t) => (
            <MenuItem key={t}>{t}</MenuItem>
          ))}
        </MenuList>
        <Status>
          <StatusCell $w={59}><Shield c="#fff" k="#1a1a1a" /></StatusCell>
          <StatusCell $w={64}><Airplay /></StatusCell>
          <StatusCell $w={62}><Flag /></StatusCell>
          <StatusCell $w={64}><Wifi /></StatusCell>
          <StatusCell $w={67}><StatusText $size={23.5}>82 %</StatusText></StatusCell>
          <StatusCell $w={80}><Battery /></StatusCell>
          <StatusCell $w={157}><StatusText $size={27} $ls={0.3}>Пн 13:57</StatusText></StatusCell>
          <StatusCell $w={63}><Search /></StatusCell>
          <StatusCell $w={56}>
            <svg width="32" height="32" viewBox="-16 -16 32 32"><SiriOrb r={16} /></svg>
          </StatusCell>
          <MenuLines />
        </Status>
      </MenuBar>

      <Window>
        <TabStrip>
          <Lights>
            <Light $c="#ed6a5e" />
            <Light $c="#e0c04c" />
            <Light $c="#72be47" />
          </Lights>
          {tabs.map((t, i) => (
            <Tab key={t.title} $active={i === 5} $line={i < 4}>
              {t.icon}
              <TabTitle $ls={t.ls}>{t.title}</TabTitle>
              <TabClose><Close c={i === 5 ? "#fff" : undefined} /></TabClose>
            </Tab>
          ))}
          <NewTab>
            <svg width="24" height="24" viewBox="0 0 24 24" stroke="#c4c7cb" strokeWidth="3"><path d="M12 0v24M0 12h24" /></svg>
          </NewTab>
        </TabStrip>
        <Toolbar>
          <NavIcon $w={65}><ArrowLeft /></NavIcon>
          <NavIcon $w={63}><ArrowLeft flip /></NavIcon>
          <NavIcon $w={58}><Reload /></NavIcon>
          <Omnibox>
            <Info />
            <Insecure>Ненадежный</Insecure>
            <Rule />
            <Url><b>cos-cos.ru</b>/math/239/</Url>
            <Star />
          </Omnibox>
          <Actions>
            <NavIcon $w={59}><Shield c="#050505" k="#47484c" w={27} /></NavIcon>
            <Rule />
            <NavIcon $w={26} />
            <NavIcon $w={62}><Playlist /></NavIcon>
            <NavIcon $w={79}><Avatar /></NavIcon>
            <Dots />
          </Actions>
        </Toolbar>

        <Page>
          <AdBox>
            <AdCell>
              <AdStub $x={33} $w={134} />
              <AdRule />
              <AdNote>Проектная декларация на рекламируемом сайте. За</AdNote>
            </AdCell>
            <AdCell><AdStub $x={34} $w={176} /></AdCell>
            <AdCell>
              <AdStub $x={30} $w={246} />
              <AdRule />
              <AdNote>Проектная декларация на рекламируемом сайте</AdNote>
            </AdCell>
            <AdCell><AdStub $x={34} $w={206} /></AdCell>
          </AdBox>
          <Crumbs>
            <Crumb $w={406}>Математический словарь</Crumb>
            <Crumb $w={1058} $filled>Формулы приведения. Как быстро получить любую формулу приведения</Crumb>
          </Crumbs>
          <Article>
            <Title>Формулы приведения. Как быстро получить любую формулу приведения</Title>
            <Sheet>
              <Grid rows={plus} op="+" cols="350px 350px 352px 1fr" h={298} />
              <Grid rows={minus} op="−" cols="347px 352px 351px 1fr" h={297} />
            </Sheet>
            <Prose>
              <Line $h={58}>
                Формулы приведения разработаны для углов, представленных в одном из следующих видов: <M f="" op="+" />,
              </Line>
              <Line $h={55}>
                <M f="" op="−" />, <M v op="+" />, <M v op="−" />, <M f="3" op="+" />, <M f="3" op="−" />, <M n="2" v op="+" /> и <M n="2" v op="−" />. Аналогично их можно использовать для углов
              </Line>
              <Line $h={46} $top={7}>
                представленных в градусах: <M n="90" deg op="+" />, <M n="90" deg op="−" />, <M n="180" deg op="+" />, <M n="180" deg op="−" />, <M n="270" deg op="+" />, <M n="270" deg op="−" />, <M n="180" deg op="+" />, <M n="180" deg op="−" />.
              </Line>
              <Line $h={40}>К счастью, учить наизусть формулы привидения вам не придется, потому что есть легкий и надежный</Line>
              <Line $h={40} $left>способ вывести нужную за пару секунд.</Line>
            </Prose>
          </Article>
        </Page>
      </Window>

      <Desktop>
        <Sea width="2880" height="134">
          <filter id="waves" x="0" y="0" width="100%" height="100%">
            <feTurbulence type="fractalNoise" baseFrequency=".045 .11" numOctaves="5" seed="7" />
            <feColorMatrix values="0 0 0 0 .1  0 0 0 0 .22  0 0 0 0 .5  2.4 2 0 0 -2.35" />
          </filter>
          <rect width="2880" height="134" filter="url(#waves)" opacity=".5" />
        </Sea>
        <Dock>
          <DockIcon name="finder" on />
          <DockIcon name="siri" />
          <DockIcon name="rocket" />
          <DockIcon name="safari" on />
          <DockIcon name="code" on />
          <DockIcon name="chrome" on />
          <DockIcon name="sublime" />
          <DockIcon name="pycharm" />
          <DockIcon name="word" on />
          <DockIcon name="vbox" />
          <DockIcon name="reminders" />
          <DockIcon name="appstore" />
          <DockRule />
          <DockIcon name="calculator" />
          <DockIcon name="preview" />
          <DockIcon name="hexagon" />
          <DockRule />
          <DockIcon name="document" />
          <DockIcon name="browser" />
          <DockIcon name="trash" />
        </Dock>
      </Desktop>
    </Screen>
  );
}
